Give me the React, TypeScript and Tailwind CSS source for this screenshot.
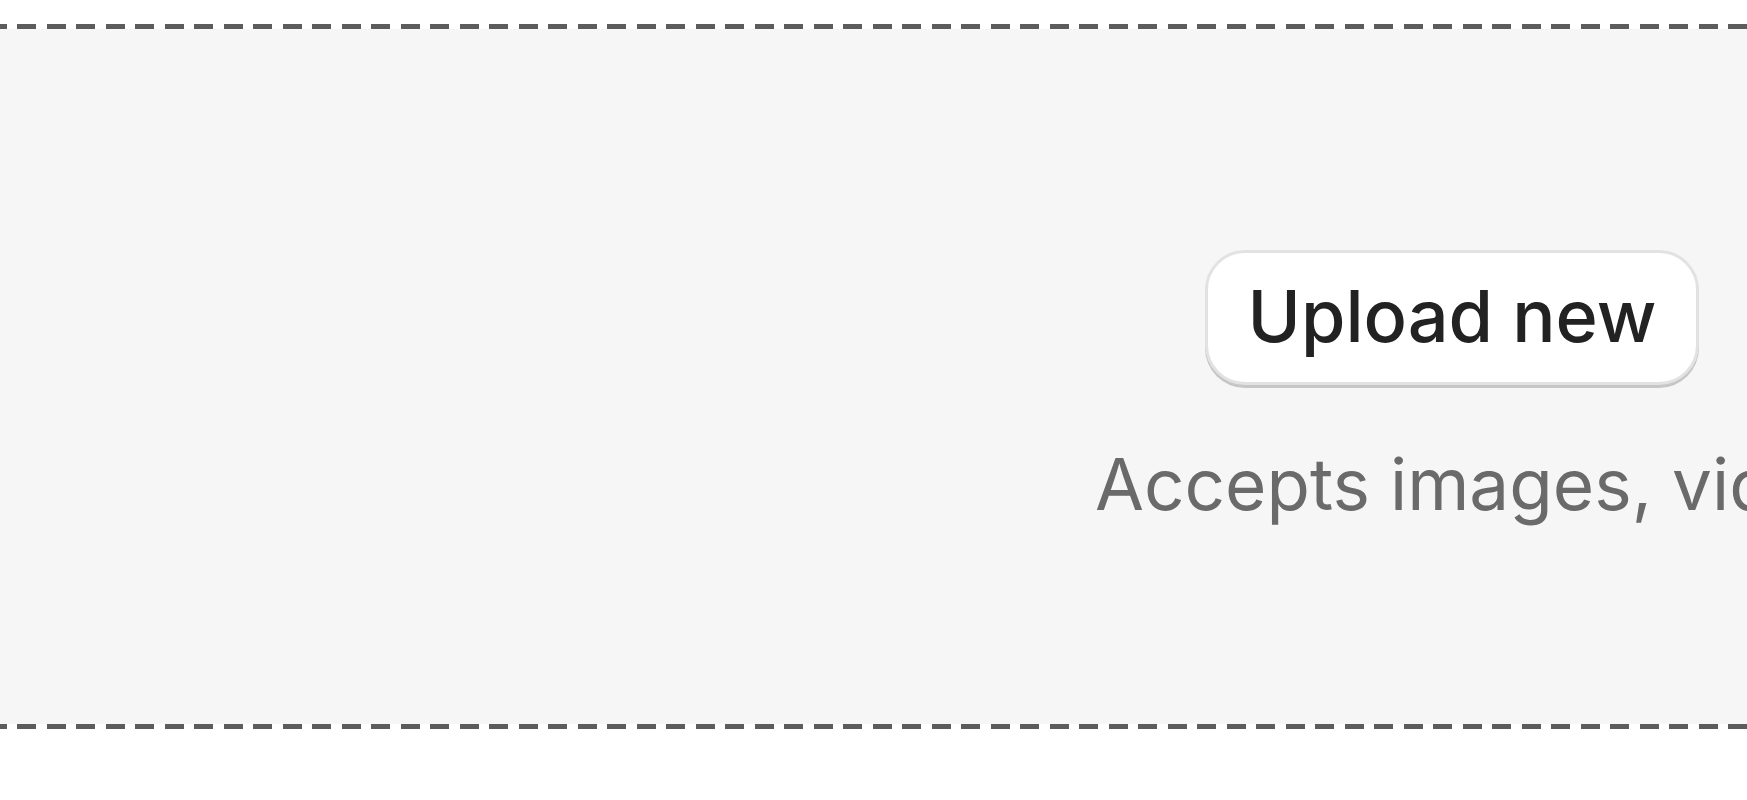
export default function App() {
  return (
    <div className="h-[800px] w-full overflow-hidden bg-white font-['Inter','Liberation_Sans',sans-serif]">
      {/* dashed edges are drawn as gradients so the dash length matches the screenshot */}
      <div className="ml-[-16px] mt-[24px] flex h-[705px] w-[2936px] items-center justify-center border-y-[5px] border-transparent [background:repeating-linear-gradient(90deg,transparent_0_4px,#5c5c5c_4px_23px,transparent_23px_29.5px)_top/100%_5px_no-repeat_border-box,repeating-linear-gradient(90deg,transparent_0_4px,#5c5c5c_4px_23px,transparent_23px_29.5px)_bottom/100%_5px_no-repeat_border-box,linear-gradient(#f6f6f6,#f6f6f6)_padding-box]">
        <div className="mt-[30px] flex w-[714px] flex-col items-center">
          <button className="rounded-[40px] border-[3px] border-[#e2e2e2] bg-white px-[40px] pb-[16px] pt-[13px] text-[72px] font-medium leading-[100px] text-[#222222] shadow-[0_3px_0_#c6c6c6]">
            Upload new
          </button>
          <p className="mt-[49px] self-start whitespace-nowrap text-[71px] leading-[100px] text-[#6a6a6a]">
            Accepts images, videos and 3D models
          </p>
        </div>
      </div>
    </div>
  );
}
